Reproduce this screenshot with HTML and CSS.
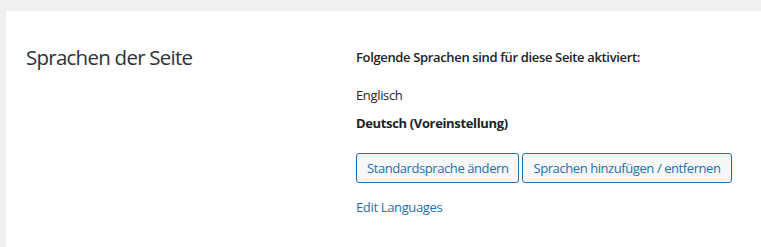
FILE: index.html
```html
<!DOCTYPE html>
<html lang="de">
<head>
<meta charset="utf-8">
<link rel="stylesheet" href="styles.css">
</head>
<body>
<div class="panel">
  <div class="col-left">
    <h2 class="title">Sprachen der Seite</h2>
  </div>
  <div class="col-right">
    <p class="intro">Folgende Sprachen sind für diese Seite aktiviert:</p>
    <p class="lang">Englisch</p>
    <p class="lang default">Deutsch (Voreinstellung)</p>
    <div class="buttons">
      <button class="btn" type="button">Standardsprache ändern</button>
      <button class="btn" type="button">Sprachen hinzufügen / entfernen</button>
    </div>
    <a class="edit" href="#">Edit Languages</a>
  </div>
</div>
</body>
</html>
```
FILE: styles.css
```css
html, body {
  margin: 0;
  padding: 0;
  height: 100%;
}
body {
  background: #f0f0f1;
  font-family: "Open Sans", "Noto Sans", sans-serif;
  font-size: 13px;
  letter-spacing: -0.35px;
  color: #1d2327;
  padding: 11px 0 0 6px;
  box-sizing: border-box;
}
.panel {
  background: #fff;
  height: 100%;
  display: grid;
  grid-template-columns: 330px 1fr;
  padding: 0 0 0 20px;
  box-sizing: border-box;
}
.title {
  margin: 31px 0 0;
  font-size: 20.5px;
  letter-spacing: -0.75px;
  font-weight: 400;
  line-height: 30px;
  color: #2c3338;
}
.col-right {
  display: flex;
  flex-direction: column;
  align-items: flex-start;
  padding-top: 37px;
}
.intro {
  margin: 0;
  font-weight: 600;
  line-height: 18px;
}
.lang {
  margin: 20px 0 0;
  line-height: 18px;
}
.lang.default {
  margin-top: 10px;
  font-weight: 700;
}
.buttons {
  display: flex;
  gap: 3px;
  margin-top: 21px;
}
.btn {
  font-family: inherit;
  font-size: 13px;
  letter-spacing: -0.42px;
  color: #2271b1;
  background: #f6f7f7;
  border: 1px solid #2271b1;
  border-radius: 3px;
  height: 30px;
  padding: 0 10px;
  line-height: 28px;
  cursor: pointer;
}
.edit {
  margin-top: 15px;
  color: #2271b1;
  text-decoration: none;
  line-height: 18px;
}
```
